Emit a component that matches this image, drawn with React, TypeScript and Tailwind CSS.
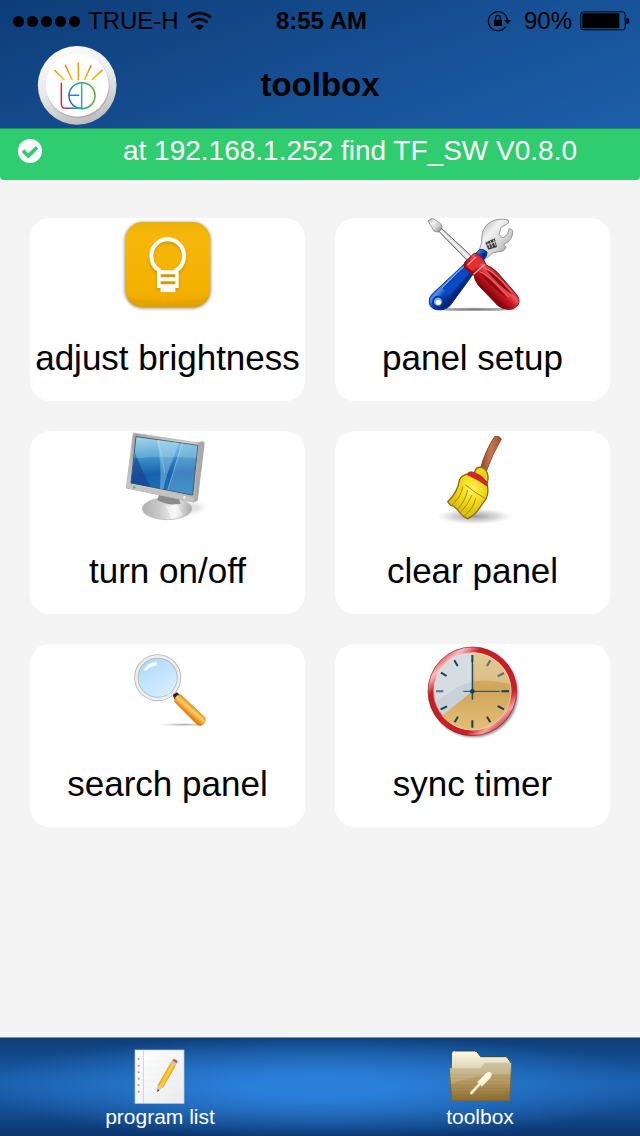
import type { ReactNode } from "react";

type Tool = {
  id: string;
  label: string;
  icon: ReactNode;
};

const SignalDots = () => (
  <div className="flex gap-[3px]">
    {[1, 2, 3, 4, 5].map((dot) => (
      <span key={dot} className="size-[11px] rounded-full bg-black" />
    ))}
  </div>
);

const WifiIcon = () => (
  <svg viewBox="570 30 76 60" className="w-[25px] h-5" aria-hidden="true">
    <g fill="none" stroke="#000" strokeWidth="8">
      <path d="M573 49Q608 23 643 49" />
      <path d="M583 64Q608 44 633 64" />
    </g>
    <path d="M594 76Q608 65 622 76L608 88z" />
  </svg>
);

const RotationLockIcon = () => (
  <svg viewBox="498 27 75 66" className="w-[25px] h-[22px]" aria-hidden="true">
    <path d="M559 58A28.500 28.500 0 1 0 554 77" fill="none" stroke="#000" strokeWidth="3.500" />
    <path d="M549 57h22l-11 12z" />
    <rect x="519" y="56" width="24" height="19" rx="2" />
    <path d="M524 56v-6a7 7 0 0 1 14 0v6" fill="none" stroke="#000" strokeWidth="3.500" />
  </svg>
);

const BatteryIcon = () => (
  <svg viewBox="779 32 150 60" className="w-[50px] h-5" aria-hidden="true">
    <rect x="781.500" y="34.500" width="133" height="54" rx="8" fill="none" stroke="#000" strokeWidth="3" />
    <rect x="786" y="39" width="111" height="45" rx="3" />
    <path d="M918 52q9 1 9 10t-9 10z" />
  </svg>
);

const LedLogo = () => (
  <svg viewBox="112 132 240 240" className="size-20" aria-hidden="true">
    <defs>
      <linearGradient id="logoRim" x1="0.300" y1="0" x2="0.600" y2="1">
        <stop offset="0" stopColor="#fdfdfd" />
        <stop offset="0.500" stopColor="#e9e9e9" />
        <stop offset="1" stopColor="#bcbcbc" />
      </linearGradient>
      <linearGradient id="logoFoot" gradientUnits="userSpaceOnUse" x1="188" y1="0" x2="246" y2="0">
        <stop offset="0" stopColor="#dd2432" />
        <stop offset="0.350" stopColor="#7b3fa0" />
        <stop offset="0.700" stopColor="#1c9ada" />
        <stop offset="1" stopColor="#1aa5c0" />
      </linearGradient>
      <linearGradient id="logoD" gradientUnits="userSpaceOnUse" x1="206" y1="300" x2="288" y2="284">
        <stop offset="0" stopColor="#3c50ad" />
        <stop offset="0.350" stopColor="#1aa5d0" />
        <stop offset="0.650" stopColor="#35ac74" />
        <stop offset="1" stopColor="#4dac24" />
      </linearGradient>
      <linearGradient id="logoRay" gradientUnits="userSpaceOnUse" x1="0" y1="184" x2="0" y2="238">
        <stop offset="0" stopColor="#e8730a" />
        <stop offset="1" stopColor="#ffc400" />
      </linearGradient>
    </defs>
    <circle cx="232.500" cy="253" r="118" fill="url(#logoRim)" />
    <circle cx="234" cy="255" r="96" fill="#8e8e8e" opacity="0.500" />
    <circle cx="232.500" cy="252" r="95" fill="#fff" />
    <g fill="none" strokeWidth="4.500" strokeLinecap="round">
      <path d="M165 208L193 236M197 193L217 235M274 194L255 235M307 208L278 235" stroke="url(#logoRay)" />
      <path d="M236 186V236" stroke="#f39b08" />
      <path d="M185 247V308Q185 316 190 320" stroke="#dd2432" />
      <path d="M189 319Q193 322 201 322H248" stroke="url(#logoFoot)" />
      <circle cx="247" cy="284" r="39" stroke="url(#logoD)" />
      <path d="M208 283H237" stroke="#2783cd" />
      <path d="M246 248V320" stroke="#36ad91" />
    </g>
  </svg>
);

const BulbIcon = () => (
  <svg viewBox="8 18 300 300" className="size-[100px]" aria-hidden="true">
    <defs>
      <linearGradient id="bulbTile" x1="0" y1="0" x2="0" y2="1">
        <stop offset="0" stopColor="#edae08" />
        <stop offset="0.150" stopColor="#f6b70a" />
        <stop offset="0.850" stopColor="#f3b000" />
        <stop offset="1" stopColor="#e4a000" />
      </linearGradient>
      <filter id="soft" x="-20%" y="-20%" width="140%" height="140%">
        <feGaussianBlur stdDeviation="4" />
      </filter>
    </defs>
    <rect x="27" y="30" width="260" height="260" rx="56" fill="#6f6038" opacity="0.600" filter="url(#soft)" />
    <rect x="30" y="30" width="255" height="256" rx="54" fill="url(#bulbTile)" />
    <path d="M32 240Q34 258 60 262Q157 276 255 262Q281 258 283 240Q280 284 231 286H84Q34 284 32 240z" fill="#dfa000" opacity="0.500" />
    <g transform="translate(0 7)" opacity="0.350" filter="url(#soft)">
      <path d="M130 226V176Q106 160 107 131A50 50 0 0 1 207 131Q207 160 184 176V226" fill="none" stroke="#8a6000" strokeWidth="11" />
    </g>
    <path d="M131 182V175Q108 161 108 131A49 49 0 0 1 206 131Q206 161 183 175V182" fill="none" stroke="#fff" strokeWidth="12" />
    <path d="M125 175h65v53h-10v12h-44v-12h-11z" fill="#fff" />
    <path d="M136 187h44v9h-44zM136 208h44v9h-44z" fill="#d79a00" />
  </svg>
);

const RepairIcon = () => (
  <svg viewBox="22 18 300 300" className="size-[100px]" aria-hidden="true">
    <defs>
      <linearGradient id="steel" x1="0" y1="0" x2="1" y2="1">
        <stop offset="0" stopColor="#9a9a9a" />
        <stop offset="0.350" stopColor="#f2f2f2" />
        <stop offset="0.650" stopColor="#cfcfcf" />
        <stop offset="1" stopColor="#777" />
      </linearGradient>
      <linearGradient id="blueGrip" gradientUnits="userSpaceOnUse" x1="95" y1="190" x2="135" y2="228">
        <stop offset="0" stopColor="#0a3fae" />
        <stop offset="0.250" stopColor="#4c90f4" />
        <stop offset="0.550" stopColor="#0b49c4" />
        <stop offset="1" stopColor="#052678" />
      </linearGradient>
      <linearGradient id="redGrip" gradientUnits="userSpaceOnUse" x1="255" y1="185" x2="205" y2="235">
        <stop offset="0" stopColor="#8e0d13" />
        <stop offset="0.300" stopColor="#f0565a" />
        <stop offset="0.600" stopColor="#c9151e" />
        <stop offset="1" stopColor="#76060c" />
      </linearGradient>
      <radialGradient id="floor">
        <stop offset="0" stopColor="#333" stopOpacity="0.700" />
        <stop offset="0.800" stopColor="#777" stopOpacity="0.500" />
        <stop offset="1" stopColor="#999" stopOpacity="0" />
      </radialGradient>
    </defs>
    <ellipse cx="175" cy="292" rx="138" ry="6" fill="url(#floor)" />
    <path d="M186 128L198 92Q196 54 216 36Q242 15 277 24L279 33L256 46L250 68L262 78L276 66L281 49L291 56Q293 84 264 98L272 108L262 117L232 122L208 142z" fill="url(#steel)" stroke="#999" strokeWidth="3" />
    <path d="M209 92L237 79L244 105L218 113z" fill="#383838" />
    <path d="M216 92l7 16M224 87l7 19M233 83l6 18M212 100l29-11" stroke="#d5d5d5" strokeWidth="3" />
    <path d="M186 118Q196 105 214 120Q216 132 204 143L103 281Q88 296 62 293Q35 286 42 258Q45 250 54 242L172 132z" fill="url(#blueGrip)" stroke="#073087" strokeWidth="3" />
    <path d="M178 135Q128 175 80 228L100 251Q140 212 183 151z" fill="#0b49c4" />
    <path d="M177 137Q126 177 79 228" fill="none" stroke="#8cb8ff" strokeWidth="3" />
    <circle cx="67" cy="269" r="15" fill="#72a8ef" stroke="#073589" strokeWidth="5" />
    <circle cx="68" cy="271" r="8" fill="#fff" />
    <circle cx="204" cy="129" r="5" fill="#052568" />
    <path d="M65 53L73 45L167 132L154 145z" fill="#ddd" stroke="#5c5c5c" strokeWidth="3" />
    <path d="M69 51L160 137" stroke="#fff" strokeWidth="4" />
    <path d="M37 27L50 18L75 35Q83 49 74 55Q68 64 55 57z" fill="url(#steel)" stroke="#777" strokeWidth="2" />
    <path d="M147 151L176 124Q189 123 204 143Q208 151 211 159Q229 165 245 181L302 247Q315 262 307 279Q295 294 277 292Q258 291 246 280L188 220Q177 204 174 187Q150 178 145 161z" fill="url(#redGrip)" stroke="#8c0b11" strokeWidth="3" />
    <path d="M150 161L179 131L202 149L171 177z" fill="#df3037" />
    <path d="M156 158L181 135M174 187L208 157" stroke="#ff9b9b" strokeWidth="4" />
    <path d="M190 181Q215 189 276 260Q230 230 190 181zM211 173Q238 183 292 250Q250 222 211 173z" fill="#8a0c13" />
    <path d="M192 179Q219 187 278 255M216 172Q239 182 288 239" fill="none" stroke="#f57777" strokeWidth="3" />
  </svg>
);

const MonitorIcon = () => (
  <svg viewBox="8 18 300 300" className="size-[100px]" aria-hidden="true">
    <defs>
      <linearGradient id="bezel" x1="0" y1="0" x2="1" y2="1">
        <stop offset="0" stopColor="#999" />
        <stop offset="0.500" stopColor="#d7d7d7" />
        <stop offset="1" stopColor="#a8a8a8" />
      </linearGradient>
      <linearGradient id="screen" x1="0.200" y1="0" x2="0.300" y2="1">
        <stop offset="0" stopColor="#8fcbe6" />
        <stop offset="0.300" stopColor="#469bd1" />
        <stop offset="0.650" stopColor="#1761ac" />
        <stop offset="1" stopColor="#1b74bd" />
      </linearGradient>
      <linearGradient id="base" x1="0" y1="0" x2="1" y2="0">
        <stop offset="0" stopColor="#b0b0b0" />
        <stop offset="0.350" stopColor="#cacaca" />
        <stop offset="0.650" stopColor="#f3f3f3" />
        <stop offset="1" stopColor="#a8a8a8" />
      </linearGradient>
      <filter id="monitorShadow" x="-30%" y="-60%" width="160%" height="220%">
        <feGaussianBlur stdDeviation="6" />
      </filter>
    </defs>
    <ellipse cx="188" cy="248" rx="75" ry="18" fill="#999" opacity="0.300" filter="url(#monitorShadow)" />
    <ellipse cx="155" cy="251" rx="74" ry="33" fill="url(#base)" stroke="#b5b5b5" strokeWidth="2" />
    <path d="M132 206L190 220L196 236Q160 244 126 226z" fill="#8b8b8b" />
    <path d="M152 242Q170 244 184 236L202 270Q185 279 168 281z" fill="#fff" opacity="0.450" />
    <path d="M246 53L263 50L267 54L246 226L234 232z" fill="#a9a9a9" stroke="#999" strokeWidth="2" />
    <path d="M54 24L248 54L235 231L33 189z" fill="url(#bezel)" stroke="#b9b9b9" strokeWidth="3" />
    <path d="M35 175L236 218L234 230L33 188z" fill="#c3c3c3" />
    <path d="M62 35L247 61L232 210L47 174z" fill="url(#screen)" stroke="#3d556b" strokeWidth="3" />
    <path d="M124 44L190 53L178 90Q152 150 144 193L134 191Q140 110 124 44z" fill="#a8dcf0" opacity="0.400" />
    <path d="M198 55L246 62L231 209L157 195z" fill="#a8dff0" opacity="0.280" />
    <path d="M60 84Q80 140 106 186L48 174z" fill="#183b8c" opacity="0.600" />
    <path d="M200 58L157 196M128 45Q143 110 148 145" fill="none" stroke="#bce8f4" strokeWidth="2" opacity="0.600" />
    <path d="M62 35L247 61L243 99Q150 92 57 100z" fill="#fff" opacity="0.180" />
    <circle cx="57" cy="187" r="4" fill="#61c34c" />
    <circle cx="207" cy="217" r="4" fill="#eee" />
  </svg>
);

const BroomIcon = () => (
  <svg viewBox="-8 18 300 300" className="size-[100px]" aria-hidden="true">
    <defs>
      <radialGradient id="broomShadow">
        <stop offset="0" stopColor="#777" stopOpacity="0.750" />
        <stop offset="0.600" stopColor="#aaa" stopOpacity="0.450" />
        <stop offset="1" stopColor="#ccc" stopOpacity="0" />
      </radialGradient>
      <radialGradient id="straw" cx="0.600" cy="0.350">
        <stop offset="0" stopColor="#fff263" />
        <stop offset="0.550" stopColor="#f2dc18" />
        <stop offset="1" stopColor="#deC30e" />
      </radialGradient>
      <linearGradient id="stick">
        <stop offset="0" stopColor="#8c432d" />
        <stop offset="0.500" stopColor="#cc7653" />
        <stop offset="1" stopColor="#9b4c34" />
      </linearGradient>
    </defs>
    <ellipse cx="147" cy="274" rx="114" ry="24" fill="url(#broomShadow)" />
    <path d="M207 35Q221 31 227 43Q199 88 182 139L164 131Q180 74 207 35z" fill="url(#stick)" stroke="#81501e" strokeWidth="3" />
    <path d="M148 139Q150 125 167 127Q181 130 184 143Q190 155 185 172L144 151z" fill="#ead31b" stroke="#8c6913" strokeWidth="4" />
    <path d="M126 147Q107 151 101 166Q96 202 66 230L75 241L83 243L94 253L100 260L113 274L126 281Q151 268 165 244L181 222Q190 203 185 181z" fill="url(#straw)" stroke="#906713" strokeWidth="4" />
    <path d="M129 142Q136 137 149 144Q170 151 185 173L185 184Q155 158 125 150z" fill="#d8202f" stroke="#a92020" strokeWidth="2" />
    <path d="M111 184Q108 215 77 241M126 195Q118 229 95 254M139 210Q128 238 104 263M150 220Q144 250 115 274M120 180Q150 205 181 222" fill="none" stroke="#a98a14" strokeWidth="3" />
  </svg>
);

const SearchIcon = () => (
  <svg viewBox="-8 0 300 300" className="size-[100px]" aria-hidden="true">
    <defs>
      <linearGradient id="lens" x1="0" y1="0" x2="0.600" y2="1">
        <stop offset="0" stopColor="#a5d5f6" />
        <stop offset="0.500" stopColor="#bfe3fd" />
        <stop offset="1" stopColor="#d4eeff" />
      </linearGradient>
      <linearGradient id="orange" gradientUnits="userSpaceOnUse" x1="219" y1="184" x2="195" y2="211">
        <stop offset="0" stopColor="#e08210" />
        <stop offset="0.400" stopColor="#ffd06b" />
        <stop offset="0.700" stopColor="#f39a22" />
        <stop offset="1" stopColor="#d96a00" />
      </linearGradient>
      <radialGradient id="searchShadow">
        <stop offset="0" stopColor="#777" stopOpacity="0.650" />
        <stop offset="1" stopColor="#ccc" stopOpacity="0" />
      </radialGradient>
    </defs>
    <ellipse cx="190" cy="242" rx="86" ry="6" fill="url(#searchShadow)" />
    <circle cx="111" cy="101" r="64" fill="url(#lens)" stroke="#b3b6b8" strokeWidth="13" />
    <circle cx="111" cy="101" r="64" fill="none" stroke="#eceeef" strokeWidth="8" />
    <path d="M69 81Q78 54 109 54Q111 65 101 67Q86 67 80 78z" fill="#fff" opacity="0.850" />
    <path d="M146 143Q160 132 163 112Q160 150 120 158Q137 152 146 143z" fill="#f0fbff" opacity="0.700" />
    <path d="M157 152L169 145L179 154L172 169L160 164z" fill="#222" />
    <path d="M163 163Q169 149 181 153L252 220Q258 230 249 239Q240 249 230 242L162 174z" fill="url(#orange)" stroke="#d8821f" strokeWidth="2" />
  </svg>
);

const ClockIcon = () => (
  <svg viewBox="8 15 300 300" className="size-[100px]" aria-hidden="true">
    <defs>
      <linearGradient id="clockRim" x1="0.100" y1="0.050" x2="0.900" y2="0.950">
        <stop offset="0" stopColor="#ca2730" />
        <stop offset="0.120" stopColor="#ffc1c3" />
        <stop offset="0.240" stopColor="#c61d26" />
        <stop offset="0.780" stopColor="#cc1f29" />
        <stop offset="0.880" stopColor="#ff9fa2" />
        <stop offset="1" stopColor="#981118" />
      </linearGradient>
      <linearGradient id="sand" x1="0" y1="0" x2="0" y2="1">
        <stop offset="0" stopColor="#d9b772" />
        <stop offset="0.500" stopColor="#cfa65a" />
        <stop offset="1" stopColor="#e5bf77" />
      </linearGradient>
      <filter id="clockShadow">
        <feGaussianBlur stdDeviation="3" />
      </filter>
    </defs>
    <circle cx="161" cy="162" r="133" fill="#444" opacity="0.550" filter="url(#clockShadow)" />
    <circle cx="156" cy="157" r="124" fill="#c7d2d8" stroke="url(#clockRim)" strokeWidth="18" />
    <circle cx="156" cy="157" r="133" fill="none" stroke="#8f1a20" strokeWidth="2" />
    <path d="M156 157V40A117 117 0 1 1 65 230z" fill="url(#sand)" />
    <path d="M39 157A117 117 0 0 1 273 157Q273 145 270 136Q158 105 91 158Q61 178 44 192Q39 177 39 157z" fill="#fff" opacity="0.250" />
    <circle cx="156" cy="157" r="116" fill="none" stroke="#fff3dc" strokeWidth="2" opacity="0.600" />
    <g stroke="#173f55" strokeWidth="6">
      <path d="M156 48V69M156 244V266M243 157H266M102 64L112 81M62 101L79 111M61 211L80 202M103 250L113 233M200 233L210 250M232 201L251 211" />
      <path d="M47 157H69M210 64L200 81M251 102L232 112" stroke="#56717c" />
    </g>
    <path d="M129 157H238" stroke="#244b59" strokeWidth="3" />
    <path d="M156 68V182" stroke="#244b59" strokeWidth="4" />
    <path d="M160 75V180" stroke="#777" strokeWidth="3" opacity="0.400" />
    <circle cx="156" cy="157" r="7" fill="#123b50" />
  </svg>
);

const NotebookIcon = () => (
  <svg viewBox="381 51 198 174" className="w-[66px] h-[58px]" aria-hidden="true">
    <defs>
      <linearGradient id="paper" x1="0" y1="0" x2="1" y2="1">
        <stop offset="0" stopColor="#fff" />
        <stop offset="1" stopColor="#e9ebed" />
      </linearGradient>
      <linearGradient id="pencil" gradientUnits="userSpaceOnUse" x1="491" y1="132" x2="509" y2="142">
        <stop offset="0" stopColor="#d98713" />
        <stop offset="0.400" stopColor="#ffcf3c" />
        <stop offset="0.650" stopColor="#ffc633" />
        <stop offset="1" stopColor="#dc8a15" />
      </linearGradient>
    </defs>
    <rect x="405" y="60" width="147" height="160" fill="url(#paper)" stroke="#c5ccd5" strokeWidth="2" />
    <path d="M430 61V219" stroke="#efc6c8" strokeWidth="3" />
    <path d="M440 94H540M440 114H540M440 134H540M440 154H540M440 174H540M440 194H540" stroke="#eceef0" strokeWidth="1" />
    {[87, 107, 127, 146, 166, 185].map((y) => (
      <circle key={y} cx="416" cy={y} r="3" fill="#969aa0" />
    ))}
    <path d="M472 186L474 164L486 172z" fill="#e8caa1" stroke="#aa8b66" strokeWidth="1" />
    <path d="M472 186L473 178L478 181z" fill="#333" />
    <path d="M474 164L512 98L527 107L489 173Q482 174 474 164z" fill="url(#pencil)" />
    <path d="M512 98L516 91L531 99L527 107z" fill="#bfc5ca" />
    <path d="M516 91Q522 84 530 91Q534 96 531 100z" fill="#d64a2e" />
  </svg>
);

const FolderIcon = () => (
  <svg viewBox="381 51 198 174" className="w-[66px] h-[58px]" aria-hidden="true">
    <defs>
      <linearGradient id="folderBack" x1="0" y1="0" x2="0" y2="1">
        <stop offset="0" stopColor="#fffbe8" />
        <stop offset="0.400" stopColor="#d8cfad" />
        <stop offset="1" stopColor="#9d8754" />
      </linearGradient>
      <linearGradient id="folderFront" x1="0" y1="0" x2="0" y2="1">
        <stop offset="0" stopColor="#c5b891" />
        <stop offset="0.500" stopColor="#b39a62" />
        <stop offset="1" stopColor="#8d6b2c" />
      </linearGradient>
    </defs>
    <path d="M396 213V72Q396 63 405 63H464Q470 63 474 69L482 80H557Q564 80 566 89L570 98V213z" fill="url(#folderBack)" />
    <path d="M405 63H464Q470 63 474 69L482 80H557Q564 80 566 90" fill="none" stroke="#33423f" strokeWidth="3" />
    <path d="M388 115H482L494 98H575L569 212H395z" fill="url(#folderFront)" />
    <path d="M388 115H482L494 98H575L573 134Q480 126 389 164z" fill="#fff" opacity="0.160" />
    <path d="M388 115L395 212H569L575 98" fill="none" stroke="#776439" strokeWidth="3" />
    <path d="M394 135H570M394 145H570M394 155H570M394 165H570M394 175H570M394 185H570M394 195H570" stroke="#7d6230" strokeWidth="2" opacity="0.200" />
    <path d="M454 189L480 161" stroke="#f8eed0" strokeWidth="8" strokeLinecap="round" />
    <path d="M472 157L478 150L498 130Q508 123 514 128Q518 136 511 144L491 164L485 170L480 163z" fill="#fff6dc" />
  </svg>
);

const tools: Tool[] = [
  { id: "brightness", label: "adjust brightness", icon: <BulbIcon /> },
  { id: "setup", label: "panel setup", icon: <RepairIcon /> },
  { id: "power", label: "turn on/off", icon: <MonitorIcon /> },
  { id: "clear", label: "clear panel", icon: <BroomIcon /> },
  { id: "search", label: "search panel", icon: <SearchIcon /> },
  { id: "timer", label: "sync timer", icon: <ClockIcon /> },
];

const tabs: Tool[] = [
  { id: "programs", label: "program list", icon: <NotebookIcon /> },
  { id: "toolbox", label: "toolbox", icon: <FolderIcon /> },
];

const StatusBar = () => (
  <div className="grid h-[42px] grid-cols-[1fr_auto_1fr] items-center pl-[13px] pr-[10px] text-2xl">
    <div className="flex items-center gap-2">
      <SignalDots />
      <span>TRUE-H</span>
      <WifiIcon />
    </div>
    <span className="font-bold">8:55 AM</span>
    <div className="flex items-center justify-end gap-2">
      <RotationLockIcon />
      <div className="flex items-center gap-2 pl-1">
        <span>90%</span>
        <BatteryIcon />
      </div>
    </div>
  </div>
);

const ToolCard = ({ tool }: { tool: Tool }) => (
  <button
    type="button"
    className="flex flex-col items-center rounded-[20px] bg-white pb-[23px]"
  >
    {tool.icon}
    <span className="mt-5 whitespace-nowrap text-[35px] leading-10">{tool.label}</span>
  </button>
);

const App = () => {
  return (
    <div className="flex min-h-screen flex-col bg-[#f4f4f4] font-['Liberation_Sans',Arial,sans-serif] text-black">
      <header className="bg-linear-[160deg] from-[#0e3d78] to-[#1d5fab]">
        <StatusBar />
        <div className="grid h-[86px] grid-cols-[1fr_auto_1fr] items-center px-[37px]">
          <button type="button" aria-label="LED" className="justify-self-start">
            <LedLogo />
          </button>
          <h1 className="text-[33px] leading-10 font-bold">toolbox</h1>
        </div>
      </header>

      <div
        role="status"
        className="flex items-center rounded-b border-t border-[#278b50] bg-[#2fcd70] px-[18px] pt-[6px] pb-[13px] text-white"
      >
        <svg viewBox="54 414 72 72" className="size-6" aria-hidden="true">
          <circle cx="90" cy="450" r="36" fill="#fff" />
          <path d="M69 449L85 465L111 439" fill="none" stroke="#2fcd70" strokeWidth="11" />
        </svg>
        <p className="flex-1 pl-9 text-center text-[28px] leading-8">
          at 192.168.1.252 find TF_SW V0.8.0
        </p>
      </div>

      <main className="grid flex-1 grid-cols-2 content-start gap-[30px] px-[30px] pt-[38px] pb-8">
        {tools.map((tool) => (
          <ToolCard key={tool.id} tool={tool} />
        ))}
      </main>

      <nav className="grid grid-cols-2 border-t border-[#8d9199] bg-[radial-gradient(ellipse_at_50%_50%,#2b7fd9_15%,#2b7fd900_75%),linear-gradient(180deg,#0e3d78_0%,#1b60ad_45%,#1a5aa5_60%,#0b356e_100%)] pt-[9px] pb-[7px] text-white">
        {tabs.map((tab) => (
          <a key={tab.id} href={`#${tab.id}`} className="flex flex-col items-center">
            {tab.icon}
            <span className="text-[21px] leading-6">{tab.label}</span>
          </a>
        ))}
      </nav>
    </div>
  );
};

export default App;
